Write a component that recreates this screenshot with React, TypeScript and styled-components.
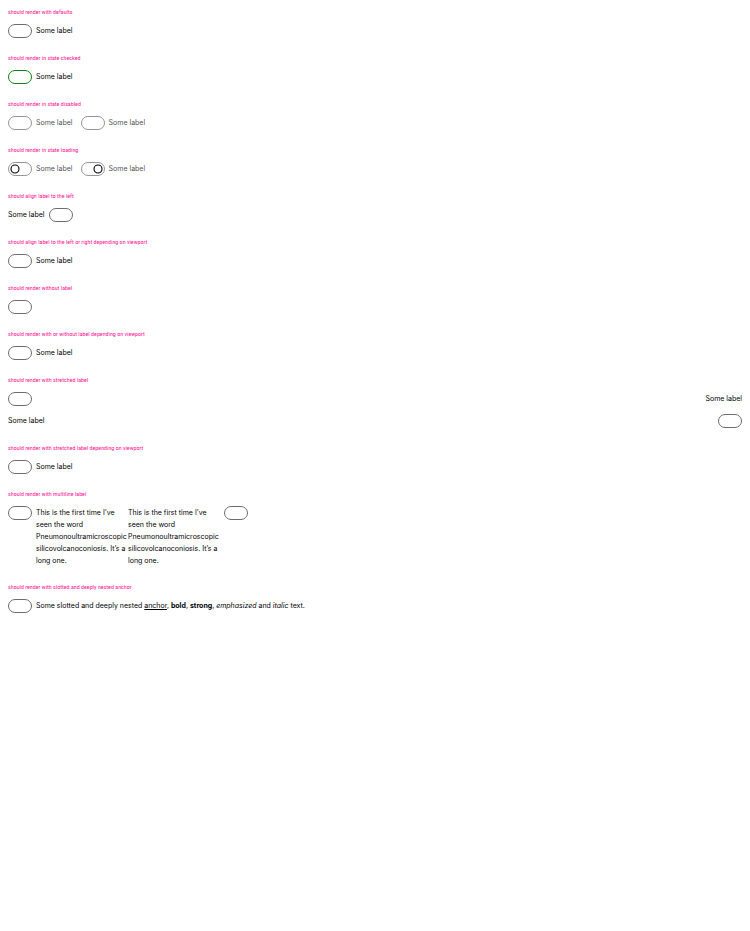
import React, { useId, useState } from 'react';
import styled, { createGlobalStyle, css } from 'styled-components';

const GlobalStyle = createGlobalStyle`
  body {
    margin: 0;
    background: #fff;
    color: #010205;
    font-family: Inter, Roboto, sans-serif;
    font-size: 7px;
    line-height: 12px;
  }
`;

const Page = styled.main`
  display: flex;
  flex-direction: column;
  gap: 16px;
  padding: 8px;
`;

const Section = styled.section`
  display: flex;
  flex-direction: column;
  gap: 8px;
`;

const Title = styled.h2`
  margin: 0;
  color: #ff1493;
  font-family: "Roboto Condensed", Roboto, sans-serif;
  font-size: 6px;
  font-weight: 400;
  line-height: 8px;
`;

const Row = styled.div<{ $flush?: boolean }>`
  display: flex;
  align-items: flex-start;
  gap: ${(p) => (p.$flush ? 0 : 8)}px;
`;

const Field = styled.div<{ $reverse?: boolean; $stretch?: boolean }>`
  display: flex;
  flex-direction: ${(p) => (p.$reverse ? 'row-reverse' : 'row')};
  align-items: flex-start;
  justify-content: ${(p) => (p.$stretch ? 'space-between' : 'flex-start')};
  gap: 4px;
`;

const Track = styled.button<{ $on: boolean }>`
  display: flex;
  flex: none;
  align-items: center;
  justify-content: ${(p) => (p.$on ? 'flex-end' : 'flex-start')};
  box-sizing: border-box;
  width: 24px;
  height: 14px;
  padding: 0 1px;
  border: 1px solid ${(p) => (p.$on ? '#108212' : '#6b6d70')};
  border-radius: 7px;
  background: #fff;
  cursor: pointer;

  &:disabled {
    border-color: #949598;
    cursor: not-allowed;
  }
`;

const Spinner = styled.svg`
  display: block;
  width: 10px;
  height: 10px;
`;

const Label = styled.label<{ $muted?: boolean; $multiline?: boolean }>`
  padding-top: 1px;
  color: ${(p) => (p.$muted ? '#535457' : 'inherit')};
  ${(p) => p.$multiline && css`
    width: 92px;
    white-space: nowrap;
  `}
`;

const Anchor = styled.a`
  color: inherit;
  text-decoration: underline;
`;

type SwitchProps = {
  children?: React.ReactNode;
  checked?: boolean;
  disabled?: boolean;
  loading?: boolean;
  reverse?: boolean;
  stretch?: boolean;
  multiline?: boolean;
};

function Switch({ children, checked = false, disabled, loading, reverse, stretch, multiline }: SwitchProps) {
  const id = useId();
  const [on, setOn] = useState(checked);
  const inactive = disabled || loading;
  return (
    <Field $reverse={reverse} $stretch={stretch}>
      <Track
        id={id}
        type="button"
        role="switch"
        aria-checked={on}
        aria-busy={loading}
        aria-label={children ? undefined : 'Switch'}
        disabled={inactive}
        $on={on}
        onClick={() => setOn(!on)}
      >
        {loading && (
          <Spinner viewBox="0 0 10 10" aria-hidden="true">
            <circle cx="5" cy="5" r="4" fill="none" stroke="#010205" strokeWidth="1.1" />
          </Spinner>
        )}
      </Track>
      {children && (
        <Label htmlFor={id} $muted={inactive} $multiline={multiline}>
          {children}
        </Label>
      )}
    </Field>
  );
}

function LongText() {
  return (
    <>
      This is the first time I’ve<br />
      seen the word<br />
      Pneumonoultramicroscopic<br />
      silicovolcanoconiosis. It’s a<br />
      long one.
    </>
  );
}

function Example({ title, children }: { title: string; children: React.ReactNode }) {
  return (
    <Section>
      <Title>{title}</Title>
      {children}
    </Section>
  );
}

export default function App() {
  return (
    <>
      <GlobalStyle />
      <Page>
        <Example title="should render with defaults">
          <Switch>Some label</Switch>
        </Example>
        <Example title="should render in state checked">
          <Switch checked>Some label</Switch>
        </Example>
        <Example title="should render in state disabled">
          <Row>
            <Switch disabled>Some label</Switch>
            <Switch disabled checked>Some label</Switch>
          </Row>
        </Example>
        <Example title="should render in state loading">
          <Row>
            <Switch loading>Some label</Switch>
            <Switch loading checked>Some label</Switch>
          </Row>
        </Example>
        <Example title="should align label to the left">
          <Row>
            <Switch reverse>Some label</Switch>
          </Row>
        </Example>
        <Example title="should align label to the left or right depending on viewport">
          <Switch>Some label</Switch>
        </Example>
        <Example title="should render without label">
          <Switch />
        </Example>
        <Example title="should render with or without label depending on viewport">
          <Switch>Some label</Switch>
        </Example>
        <Example title="should render with stretched label">
          <Switch stretch>Some label</Switch>
          <Switch stretch reverse>Some label</Switch>
        </Example>
        <Example title="should render with stretched label depending on viewport">
          <Switch>Some label</Switch>
        </Example>
        <Example title="should render with multiline label">
          <Row $flush>
            <Switch multiline><LongText /></Switch>
            <Switch multiline reverse><LongText /></Switch>
          </Row>
        </Example>
        <Example title="should render with slotted and deeply nested anchor">
          <Switch>
            Some slotted and deeply nested <Anchor href="#">anchor</Anchor>, <b>bold</b>,{' '}
            <strong>strong</strong>, <em>emphasized</em> and <i>italic</i> text.
          </Switch>
        </Example>
      </Page>
    </>
  );
}
